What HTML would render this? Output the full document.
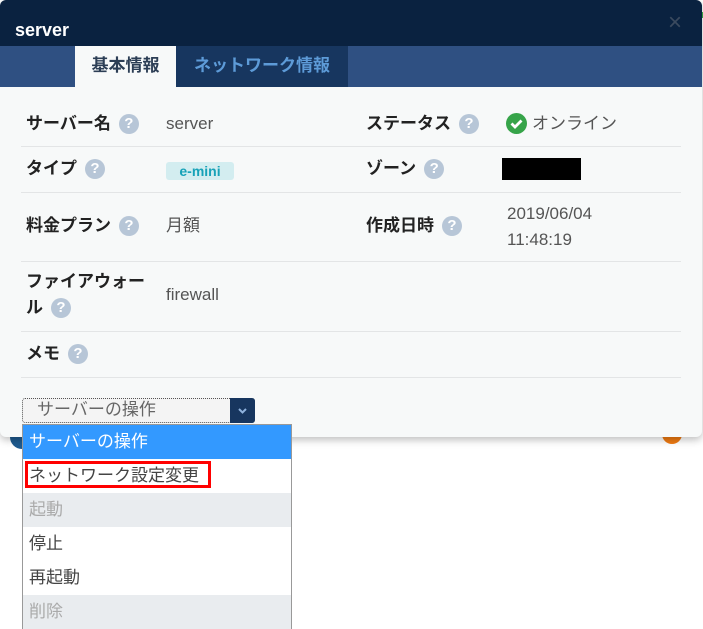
<!DOCTYPE html>
<html><head><meta charset="utf-8"><style>
body{margin:0;width:703px;height:629px;background:#fff;position:relative;overflow:hidden;font-family:"Liberation Sans","Noto Sans CJK JP",sans-serif}
.modal{position:absolute;left:0;top:0;width:702px;height:437px;background:#f7f9f9;border-radius:6px;box-shadow:0 3px 8px rgba(0,0,0,.25);overflow:hidden}
.hdr{position:absolute;left:0;top:0;width:702px;height:46px;background:#0a2240}
.hdr .t{position:absolute;left:15px;top:20px;color:#fff;font-weight:bold;font-size:18px}
.hdr .x{position:absolute;left:668px;top:9px;color:#3b4a5e;font-size:24px}
.tabs{position:absolute;left:0;top:46px;width:702px;height:41px;background:#2f5082}
.tab{position:absolute;top:0;height:41px;line-height:40px;font-weight:bold;font-size:17px;text-align:center}
.lbl{position:absolute;font-weight:bold;font-size:17px;color:#222;display:flex;align-items:center;height:22px;line-height:22px}
.val{position:absolute;font-size:17px;color:#555;line-height:22px}
.q{display:inline-block;width:20px;height:20px;border-radius:50%;background:#b7c6d7;color:#fff;font-size:15px;text-align:center;line-height:20px;margin-left:8px;font-weight:bold}
.hr{position:absolute;left:21px;width:660px;height:1px;background:#e3e5e6}
.opt{position:absolute;left:1px;width:268px;height:34px;line-height:34px;font-size:17px;padding-left:6px;box-sizing:border-box;color:#444}
</style></head><body>
<div style="position:absolute;left:10px;top:425px;width:24px;height:24px;border-radius:50%;background:#1e5a8f"></div>
<div style="position:absolute;left:662px;top:424px;width:20px;height:20px;border-radius:50%;background:#f07b12"></div>
<div style="position:absolute;left:700px;top:12px;width:3px;height:6px;background:#3bb04a"></div>
<div class="modal">
<div class="hdr"><div class="t">server</div><div class="x">×</div></div>
<div class="tabs">
<div class="tab" style="left:75px;width:101px;background:#f7f9f9;color:#2c3e55">基本情報</div>
<div class="tab" style="left:176px;width:172px;background:#17365f;color:#5d9bd8">ネットワーク情報</div>
</div>
<div class="lbl" style="left:26px;top:113px">サーバー名<span class="q">?</span></div>
<div class="val" style="left:166px;top:113px">server</div>
<div class="lbl" style="left:366px;top:113px">ステータス<span class="q">?</span></div>
<div style="position:absolute;left:506px;top:113px;width:21px;height:21px;border-radius:50%;background:#36a449"><svg width="21" height="21"><path d="M5.5 10.5l3.5 3.5 6.5-6.5" stroke="#fff" stroke-width="2.8" fill="none"/></svg></div>
<div class="val" style="left:532px;top:113px">オンライン</div>
<div class="hr" style="top:146px"></div>
<div class="lbl" style="left:26px;top:158px">タイプ<span class="q">?</span></div>
<div style="position:absolute;left:166px;top:162px;width:68px;height:18px;background:#d3edf0;border-radius:3px;color:#17a2b8;font-weight:bold;font-size:14px;text-align:center;line-height:18px">e-mini</div>
<div class="lbl" style="left:366px;top:158px">ゾーン<span class="q">?</span></div>
<div style="position:absolute;left:502px;top:158px;width:79px;height:22px;background:#000"></div>
<div class="hr" style="top:192px"></div>
<div class="lbl" style="left:26px;top:215px">料金プラン<span class="q">?</span></div>
<div class="val" style="left:166px;top:215px">月額</div>
<div class="lbl" style="left:366px;top:215px">作成日時<span class="q">?</span></div>
<div class="val" style="left:507px;top:201px;line-height:26px">2019/06/04<br>11:48:19</div>
<div class="hr" style="top:261px"></div>
<div class="lbl" style="left:26px;top:271px">ファイアウォー</div>
<div class="lbl" style="left:26px;top:297px">ル<span class="q">?</span></div>
<div class="val" style="left:166px;top:284px">firewall</div>
<div class="hr" style="top:331px"></div>
<div class="lbl" style="left:26px;top:343px">メモ<span class="q">?</span></div>
<div class="hr" style="top:377px"></div>
<div style="position:absolute;left:22px;top:398px;width:233px;height:25px;background:#f4f4f4;border:1px dotted #555;box-sizing:border-box;border-radius:3px"><span style="position:absolute;left:14px;top:0px;font-size:17px;line-height:22px;color:#666">サーバーの操作</span><div style="position:absolute;right:-1px;top:-1px;width:25px;height:25px;background:#17365f;border-radius:0 3px 3px 0"><svg width="25" height="25"><path d="M9 11l3.5 3.5 3.5-3.5" stroke="#8fb2dd" stroke-width="2" fill="none"/></svg></div></div>
</div>
<div style="position:absolute;left:22px;top:424px;width:270px;height:205px;border:1px solid #999;box-sizing:border-box;background:#fff">
<div class="opt" style="top:0;left:0;background:#3399ff;color:#fff">サーバーの操作</div>
<div class="opt" style="top:34px;left:0"><span style="position:absolute;left:2px;top:2px;width:186px;height:27px;border:3px solid #f00;box-sizing:border-box"></span>ネットワーク設定変更</div>
<div class="opt" style="top:68px;left:0;background:#e9ecef;color:#aaa">起動</div>
<div class="opt" style="top:102px;left:0">停止</div>
<div class="opt" style="top:136px;left:0">再起動</div>
<div class="opt" style="top:170px;left:0;background:#e9ecef;color:#aaa">削除</div>
</div>
</body></html>
